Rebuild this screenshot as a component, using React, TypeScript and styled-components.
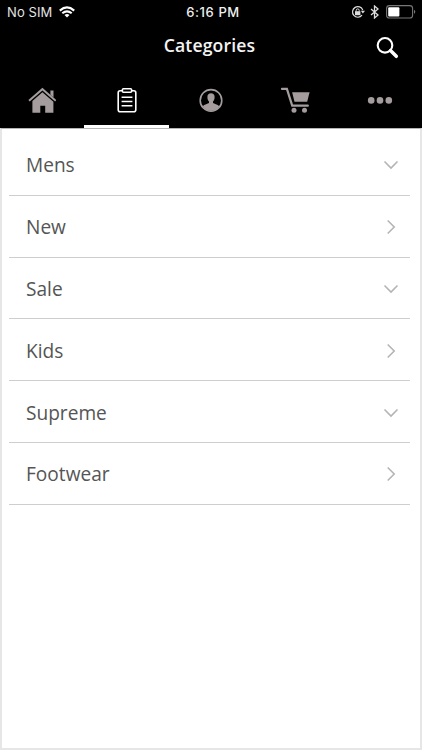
import React from "react";
import styled, { createGlobalStyle } from "styled-components";

const GlobalStyle = createGlobalStyle`
  *, *::before, *::after { box-sizing: border-box; }
  body { margin: 0; background: #fff; font-family: "Open Sans", sans-serif; }
`;

const Screen = styled.div`
  width: 422px;
  height: 750px;
  display: flex;
  flex-direction: column;
  overflow: hidden;
`;

const Header = styled.header`
  height: 128px;
  flex: none;
  display: flex;
  flex-direction: column;
  background: #000;
  color: #fff;
`;

const StatusBar = styled.div`
  height: 24px;
  display: grid;
  grid-template-columns: 1fr auto 1fr;
  align-items: center;
  padding: 0 6px 0 7px;
  font-family: Inter, sans-serif;
  font-size: 13px;
  line-height: 24px;
`;

const Carrier = styled.div`
  display: flex;
  align-items: center;
  gap: 7px;
  letter-spacing: 0.1px;
  color: #e4e4e4;
`;

const Clock = styled.time`
  font-weight: 500;
  letter-spacing: 0.6px;
  padding-left: 3px;
  color: #f0f0f0;
`;

const StatusIcons = styled.div`
  display: flex;
  align-items: center;
  justify-content: flex-end;
`;

const Spacer = styled.span<{ $width: number }>`
  width: ${(p) => p.$width}px;
  flex: none;
`;

const TitleBar = styled.div`
  height: 48px;
  display: grid;
  grid-template-columns: 1fr auto 1fr;
`;

const Title = styled.h1`
  grid-column: 2;
  margin: 0;
  padding-top: 9px;
  padding-right: 3px;
  font-size: 17.6px;
  line-height: 24px;
  font-weight: 600;
  letter-spacing: 0.15px;
  color: #f4f4f4;
`;

const SearchButton = styled.button`
  justify-self: end;
  align-self: start;
  margin: 11px 22px 0 0;
  width: 26px;
  height: 26px;
  padding: 0;
  border: 0;
  background: none;
  color: #fff;
`;

const Tabs = styled.nav`
  flex: 1;
  display: grid;
  grid-template-columns: repeat(5, 1fr);
`;

const Tab = styled.button<{ $active?: boolean }>`
  display: flex;
  align-items: center;
  justify-content: center;
  padding: 3px 0 0;
  border: 0;
  border-bottom: 3px solid ${(p) => (p.$active ? "#fff" : "#000")};
  background: #000;
  color: ${(p) => (p.$active ? "#fff" : "#a49c9d")};
`;

const Icon = styled.svg`
  display: block;
  flex: none;
`;

const Panel = styled.main`
  flex: 1;
  border: solid #e6e6e6;
  border-width: 1px 2px 2px;
  border-top-color: #b5b5b5;
  padding: 5px 10px 0 7px;
  background: #fff;
`;

const List = styled.ul`
  margin: 0;
  padding: 0;
  list-style: none;
`;

const Row = styled.li`
  height: 61.8px;
  display: flex;
  align-items: center;
  justify-content: space-between;
  padding: 2px 11px 0 17px;
  border-bottom: 1px solid #cecece;
  color: #555;
  font-size: 19.1px;
  line-height: 26px;
`;

const Arrow = styled.svg`
  display: block;
  width: 16px;
  height: 16px;
  fill: none;
  stroke: #b4b4b4;
  stroke-width: 1.6;
`;

const categories = [
  { name: "Mens", expandable: true },
  { name: "New", expandable: false },
  { name: "Sale", expandable: true },
  { name: "Kids", expandable: false },
  { name: "Supreme", expandable: true },
  { name: "Footwear", expandable: false },
];

const Wifi = () => (
  <Icon width="16" height="12" viewBox="0 0 16 12" fill="none" stroke="#fff" strokeWidth="2.1">
    <path d="M.8 4.6Q8-1.7 15.2 4.6" />
    <path d="M3.3 7.3Q8 3.3 12.7 7.3" />
    <path d="M5.5 9Q8 6.9 10.5 9L8 11.6Z" fill="#fff" stroke="none" />
  </Icon>
);

const RotationLock = () => (
  <Icon width="15" height="14" viewBox="0 0 15 14" fill="none" stroke="#ddd">
    <path d="M11.8 5.1A5.3 5.3 0 1 0 11 10.2" strokeWidth="1.2" />
    <path d="M9.8 5.8H14L11.9 8.6Z" fill="#ddd" stroke="none" />
    <rect x="4" y="6.2" width="5.4" height="4" fill="#ddd" stroke="none" />
    <path d="M5.2 6.5V5.4a1.5 1.5 0 0 1 3 0v1.1" />
  </Icon>
);

const Bluetooth = () => (
  <Icon width="9" height="14" viewBox="0 0 9 14" fill="none" stroke="#ddd" strokeWidth="1.3">
    <path d="M1 4 8 10 4.5 13V1L8 4 1 10" />
  </Icon>
);

const Battery = () => (
  <Icon width="30" height="14" viewBox="0 0 30 14">
    <rect x=".6" y=".6" width="26" height="12.4" rx="2.8" fill="none" stroke="#777" strokeWidth="1.1" />
    <rect x="2.2" y="2.2" width="11.2" height="9.2" rx="1" fill="#fff" />
    <path d="M28 4.7Q30.6 6.8 28 8.9Z" fill="#777" />
  </Icon>
);

const Search = () => (
  <Icon width="26" height="26" viewBox="0 0 26 26" fill="none" stroke="#fff">
    <circle cx="11" cy="10.3" r="7.3" strokeWidth="2.1" />
    <path d="M16.5 15.5 22.3 21.3" strokeWidth="3.5" strokeLinecap="round" />
  </Icon>
);

const Home = () => (
  <Icon width="28" height="26" viewBox="-.4 -.3 28 26" fill="currentColor">
    <path d="M14 .4 28 12.7 26.7 14.2 14 3.2 1.3 14.2 0 12.7Z" />
    <path d="M22 3.1h3.1v7.1L22 7.5Z" />
    <path d="M14 4.9 25 14.4V25.5h-8.2v-7.1h-4.9v7.1H4V13.6Z" />
  </Icon>
);

const Clipboard = () => (
  <Icon width="20" height="26" viewBox="0 -.4 20 26" fill="none" stroke="currentColor" strokeWidth="1.6">
    <path d="M5 3.3H3.2A2 2 0 0 0 1.2 5.3v17.1a2 2 0 0 0 2 2h13.6a2 2 0 0 0 2-2V5.3a2 2 0 0 0-2-2H15" />
    <rect x="5.4" y="1.3" width="9.2" height="3.6" rx="1" />
    <path d="M4.6 9.8h10.8M4.6 14h10.8M4.6 18.3h10.8" strokeWidth="1.5" />
  </Icon>
);

const Profile = () => (
  <Icon width="24" height="24" viewBox="0 -.4 24 24" fill="currentColor">
    <circle cx="12" cy="12" r="10.8" fill="none" stroke="currentColor" strokeWidth="1.6" />
    <path d="M8.4 8.5C8.4 6.1 9.8 4.8 12 4.8s3.6 1.3 3.6 3.7c0 2-.6 3.6-1.6 4.6v1.6c1 .8 4.7 1.3 6.3 3.2C18.5 20.8 15.5 22.5 12 22.5S5.5 20.8 3.7 17.9C5.3 16 9 15.5 10 14.7v-1.6C9 12.1 8.4 10.5 8.4 8.5Z" />
  </Icon>
);

const Cart = () => (
  <Icon width="30" height="26" viewBox="-.8 0 30 26" fill="currentColor">
    <path d="M1.2 .8h5.7L12.2 17.5H27a1.1 1.1 0 0 1 0 2.3H10.6L5.3 3.1H1.2a1.15 1.15 0 0 1 0-2.3Z" />
    <path d="M11.3 5.3H28.8L26.4 14.8H13.7Z" />
    <circle cx="13.2" cy="23.3" r="2.5" />
    <circle cx="23.7" cy="23.3" r="2.5" />
  </Icon>
);

const More = () => (
  <Icon width="26" height="8" viewBox="0 -.4 26 8" fill="currentColor">
    <circle cx="4.2" cy="4" r="3.3" />
    <circle cx="13" cy="4" r="3.3" />
    <circle cx="21.8" cy="4" r="3.3" />
  </Icon>
);

const tabs = [
  { label: "Home", Glyph: Home },
  { label: "Categories", Glyph: Clipboard },
  { label: "Profile", Glyph: Profile },
  { label: "Cart", Glyph: Cart },
  { label: "More", Glyph: More },
];

export default function App() {
  return (
    <Screen>
      <GlobalStyle />
      <Header>
        <StatusBar>
          <Carrier>
            No SIM
            <Wifi />
          </Carrier>
          <Clock>6:16 PM</Clock>
          <StatusIcons>
            <RotationLock />
            <Spacer $width={4} />
            <Bluetooth />
            <Spacer $width={7} />
            <Battery />
          </StatusIcons>
        </StatusBar>
        <TitleBar>
          <Title>Categories</Title>
          <SearchButton aria-label="Search">
            <Search />
          </SearchButton>
        </TitleBar>
        <Tabs>
          {tabs.map(({ label, Glyph }) => (
            <Tab key={label} aria-label={label} $active={label === "Categories"}>
              <Glyph />
            </Tab>
          ))}
        </Tabs>
      </Header>
      <Panel>
        <List>
          {categories.map(({ name, expandable }) => (
            <Row key={name}>
              {name}
              <Arrow viewBox="0 0 16 16">
                <path d={expandable ? "M1.5 4.5 8 11 14.5 4.5" : "M4.7 1.5 11.2 8 4.7 14.5"} />
              </Arrow>
            </Row>
          ))}
        </List>
      </Panel>
    </Screen>
  );
}
